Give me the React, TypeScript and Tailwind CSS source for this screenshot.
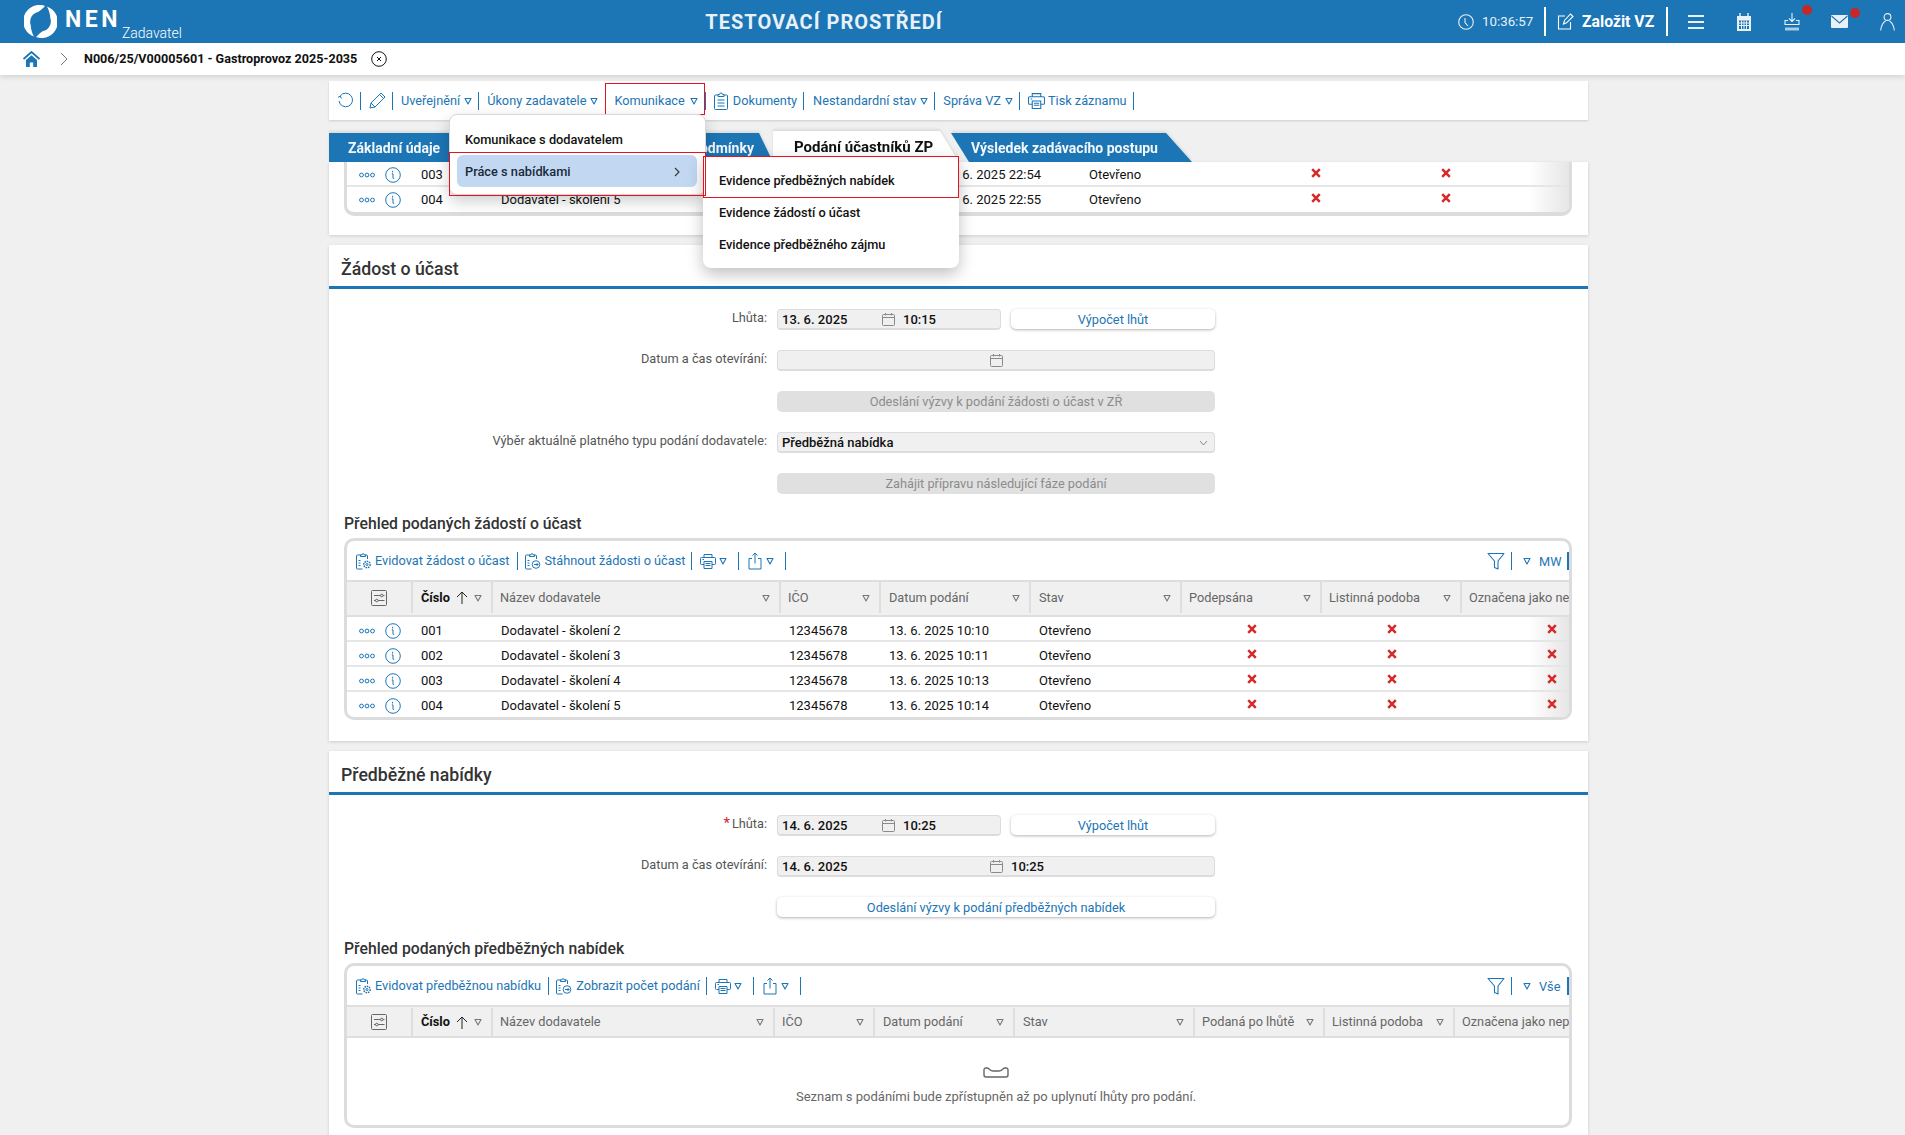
import React from "react";

const B = "#1c75b5";

function Tri({ c = B, className = "" }: { c?: string; className?: string }) {
  return (
    <svg width="8" height="8" viewBox="0 0 8 8" className={`flex-none ${className}`}>
      <path d="M1 1.5h6L4 7z" fill="none" stroke={c} strokeWidth="1.1" strokeLinejoin="round" />
    </svg>
  );
}
function Sep({ className = "ml-[7px] mr-[8px]" }: { className?: string }) {
  return <span className={`h-[18px] w-px flex-none bg-[#1c75b5] ${className}`} />;
}
function Dots() {
  return (
    <svg width="16" height="6" viewBox="0 0 16 6" className="flex-none">
      {[2.5, 8, 13.5].map((x) => (
        <circle key={x} cx={x} cy="3" r="1.9" fill="none" stroke={B} strokeWidth="1" />
      ))}
    </svg>
  );
}
function Info() {
  return (
    <svg width="16" height="16" viewBox="0 0 16 16" className="flex-none">
      <circle cx="8" cy="8" r="7.3" fill="none" stroke={B} strokeWidth="1" />
      <path d="M7.6 4.2v.9M7.2 6.9h.8v4.2c0 .4.3.6.7.5" fill="none" stroke={B} strokeWidth="1" strokeLinecap="round" />
    </svg>
  );
}
function Cross() {
  return (
    <svg width="10" height="10" viewBox="0 0 10 10" className="-translate-y-[2px]">
      <path d="M1.2 1.2l7.6 7.6M8.8 1.2L1.2 8.8" stroke="#d42a2a" strokeWidth="2.5" />
    </svg>
  );
}
function Clip({ kind }: { kind: "gear" | "arrow" }) {
  return (
    <svg width="17" height="18" viewBox="0 0 17 18" fill="none" stroke={B} strokeWidth="1" className="flex-none">
      <path d="M6 3H2.5A1 1 0 0 0 1.5 4v12a1 1 0 0 0 1 1h5M10 3h1.5a1 1 0 0 1 1 1v3" />
      <path d="M5.5 4.5V3h1.3a1.3 1.3 0 0 1 2.6 0h1.2v1.5z" />
      <path d="M3.5 8.5h2M3.5 11h2M3.5 13.5h2" />
      {kind === "gear" ? (
        <g>
          <circle cx="12" cy="12.5" r="3.2" strokeDasharray="1.6 .8" strokeWidth="1.4" />
          <circle cx="12" cy="12.5" r="1" />
        </g>
      ) : (
        <g>
          <circle cx="12" cy="12.5" r="3.8" />
          <path d="M10 12.5h4M12.6 11l1.5 1.5-1.5 1.5" />
        </g>
      )}
    </svg>
  );
}
function Printer({ s = 16 }: { s?: number }) {
  return (
    <svg width={s} height={s} viewBox="0 0 16 16" fill="none" stroke={B} strokeWidth="1" className="flex-none">
      <path d="M4 4.5V1.5h8v3M4 11.5H1.5a1 1 0 0 1-1-1V5.5a1 1 0 0 1 1-1h13a1 1 0 0 1 1 1v5a1 1 0 0 1-1 1H12" />
      <path d="M4 8.5h8v7H4zM5.5 10.5h5M5.5 12.5h5M2.5 6.5h1.5" />
    </svg>
  );
}
function Share() {
  return (
    <svg width="14" height="18" viewBox="0 0 14 18" fill="none" stroke={B} strokeWidth="1" className="flex-none">
      <path d="M4 6.5H1v10.5h12V6.5h-3M7 11.5V1M4.5 3.5L7 1l2.5 2.5" />
    </svg>
  );
}
function Funnel() {
  return (
    <svg width="18" height="18" viewBox="0 0 18 18" fill="none" stroke={B} strokeWidth="1.1" className="flex-none">
      <path d="M1 1.5h16l-6 7.5v8l-3.5-1.5V9z" strokeLinejoin="round" />
    </svg>
  );
}
function Sliders() {
  return (
    <svg width="16" height="16" viewBox="0 0 16 16" fill="none" stroke="#666" strokeWidth="1">
      <rect x=".5" y=".5" width="15" height="15" rx="1" />
      <path d="M3 5.5h6.5M12 5.5h1.5M3 10.5h1.5M7 10.5h6.5" />
      <circle cx="10.8" cy="5.5" r="1.3" />
      <circle cx="5.8" cy="10.5" r="1.3" />
    </svg>
  );
}
function Cal({ c = "#8a8a8a" }: { c?: string }) {
  return (
    <svg width="13" height="13" viewBox="0 0 13 13" fill="none" stroke={c} strokeWidth="1" className="flex-none">
      <rect x=".5" y="1.5" width="12" height="11" rx="1" />
      <path d="M.5 4.5h12M3.5 0v2.5M9.5 0v2.5" />
    </svg>
  );
}
function Logo() {
  const d = "M21 .9A16 16 0 0 0 10 31.6C8.5 29 7 25 6.7 20A10 10 0 0 1 14 7C16.5 5.5 19 3 21 .9z";
  return (
    <svg width="33" height="33" viewBox="0 0 33 33" className="flex-none">
      <path d={d} fill="#fff" />
      <path d={d} fill="#fff" transform="rotate(180 16.5 16.5)" />
    </svg>
  );
}

const tbl2 = "grid-cols-[66px_80px_288px_100px_150px_151px_140px_140px_180px]";
const tbl3 = "grid-cols-[66px_80px_282px_100px_140px_180px_130px_130px_184px]";
const tbl1 = "grid-cols-[66px_80px_279px_161px_148px_170px_130px_130px_58px]";

function Row({ cols, n, name, date, x3, last, tight }: { cols: string; n: string; name: string; date: string; x3?: boolean; last?: boolean; tight?: boolean }) {
  const pad = last ? (tight ? "pt-px" : "pt-[2px]") : tight ? "border-b-2 border-[#e6e6e6] pt-[3px]" : "border-b-2 border-[#e6e6e6] pt-[4px]";
  return (
    <div className={`relative grid h-[25px] items-center text-[13px] text-[#111] ${cols} ${pad}`}>
      <div className="flex items-center gap-[10px] pl-[12px]">
        <Dots />
        <Info />
      </div>
      <div className="pl-[8px]">{n}</div>
      <div className="pl-[8px] whitespace-nowrap">{name}</div>
      <div className="pl-[8px]">12345678</div>
      <div className="pl-[8px] whitespace-nowrap">{date}</div>
      <div className="pl-[8px]">Otevřeno</div>
      <div className="flex justify-center"><Cross /></div>
      <div className="flex justify-center"><Cross /></div>
      {x3 && <div className="flex justify-center"><Cross /></div>}
    </div>
  );
}

function Head({ cols, labels, h }: { cols: string; labels: string[]; h: string }) {
  return (
    <div className={`relative grid ${h} border-y-2 border-[#dedede] bg-[#f0f0f0] text-[12.75px] text-[#666] ${cols}`}>
      <div className="flex items-center justify-center border-r-2 border-[#dedede]"><Sliders /></div>
      <div className="flex items-center border-r-2 border-[#dedede] pl-[8px]">
        <b className="font-bold text-[#111]">Číslo</b>
        <svg width="12" height="13" viewBox="0 0 12 13" fill="none" stroke="#222" strokeWidth="1" className="ml-[6px]">
          <path d="M6 13V1M1 6l5-5 5 5" />
        </svg>
        <Tri c="#777" className="ml-[6px]" />
      </div>
      {labels.map((l, i) => (
        <div key={l} className={`flex items-center justify-between whitespace-nowrap pr-[9px] ${i === 2 || i === 3 ? "pl-[8px]" : "pl-[7px]"} ${i < labels.length - 1 ? "border-r-2 border-[#dedede]" : ""}`}>
          <span>{l}</span>
          {i < labels.length - 1 && <Tri c="#777" />}
        </div>
      ))}
    </div>
  );
}

function TBar({ a, b, right }: { a: string; b: string; right: string }) {
  return (
    <div className="flex h-[39px] items-center pl-[8px] text-[12.75px] text-[#1c75b5]">
      <Clip kind="gear" />
      <span className="ml-[3px] whitespace-nowrap">{a}</span>
      <Sep className="ml-[7px] mr-[6px]" />
      <Clip kind="arrow" />
      <span className="ml-[4px] whitespace-nowrap">{b}</span>
      <Sep className="ml-[6px] mr-[8px]" />
      <Printer />
      <Tri className="ml-[3px]" />
      <Sep className="ml-[11px] mr-[9px]" />
      <Share />
      <Tri className="ml-[4px]" />
      <Sep className="ml-[11px] mr-auto" />
      <Funnel />
      <Sep className="ml-[6px] mr-[11px]" />
      <Tri />
      <span className="ml-[8px] mr-[8px] mt-[3px] w-[20px]">{right}</span>
      <span className="h-[18px] w-[2px] flex-none bg-[#1c75b5]" />
    </div>
  );
}

function Field({ label, req, children }: { label?: string; req?: boolean; children: React.ReactNode }) {
  return (
    <div className="flex h-[21px] items-start">
      <label className="w-[438px] text-right text-[12.75px] leading-[18px] text-[#555] whitespace-nowrap">
        {req && <span className="mr-[2px] text-[15px] leading-none text-[#d42a2a]">*</span>}
        {label ? `${label}:` : ""}
      </label>
      <div className="ml-[10px] flex">{children}</div>
    </div>
  );
}
function Inp({ w, date, time, calAt }: { w: string; date?: string; time?: string; calAt: string }) {
  return (
    <div className={`relative flex h-[21px] items-center rounded-[4px] border border-b-2 border-[#dcdcdc] bg-[#f0f0f0] pl-[4px] pt-px text-[13px] font-medium text-[#111] ${w}`}>
      <span className={`whitespace-nowrap ${calAt}`}>{date}</span>
      <Cal />
      {time && <span className="ml-[8px]">{time}</span>}
    </div>
  );
}
function WhiteBtn({ w, children }: { w: string; children: React.ReactNode }) {
  return (
    <div className={`flex h-[20px] items-center justify-center rounded-[5px] bg-white pt-px text-[12.75px] text-[#1c75b5] shadow-[0_1px_3px_rgba(0,0,0,0.3)] ${w}`}>
      {children}
    </div>
  );
}
function GreyBtn({ children }: { children: React.ReactNode }) {
  return (
    <div className="flex h-[21px] w-[438px] items-center justify-center rounded-[5px] bg-[#e0e0e0] pt-px text-[12.75px] text-[#8c8c8c]">
      {children}
    </div>
  );
}
function Title({ children }: { children: React.ReactNode }) {
  return (
    <div className="flex h-[44px] items-center border-b-[3px] border-[#1c75b5] pl-[12px] pt-[8px] text-[17.7px] font-medium text-[#333]">
      {children}
    </div>
  );
}
function H3({ children, className = "" }: { children: React.ReactNode; className?: string }) {
  return <div className={`flex h-[20px] items-center pl-[15px] text-[15.75px] font-medium text-[#333] ${className}`}>{children}</div>;
}

const Fade = () => (
  <div className="pointer-events-none absolute bottom-0 right-0 top-0 w-[40px] bg-gradient-to-r from-transparent to-[#e6e6e6]" />
);

export default function App() {
  return (
    <div className="relative h-[1135px] overflow-hidden bg-[#f0f0f0] font-['Roboto',sans-serif]">
      {/* header */}
      <header className="relative z-20 flex h-[43px] items-center bg-[#1c75b5] text-white">
        <div className="flex w-[704px] flex-none items-center pl-[24px]">
          <Logo />
          <span className="ml-[8px] text-[23px] font-bold leading-none tracking-[3.5px] -translate-y-[2px]">NEN</span>
          <span className="ml-[1px] mt-[22px] text-[14px] font-light leading-none">Zadavatel</span>
        </div>
        <div className="w-[240px] flex-none whitespace-nowrap text-center text-[20px] font-bold tracking-[1px] text-[#e8f1f7]">TESTOVACÍ PROSTŘEDÍ</div>
        <div className="ml-auto flex items-center pr-[10px]">
          <svg width="16" height="16" viewBox="0 0 16 16" fill="none" stroke="#e8f1f7" strokeWidth="1.1">
            <circle cx="8" cy="8" r="7.3" />
            <path d="M7 4v4.5l3 3.5" />
          </svg>
          <span className="ml-[8px] w-[50px] whitespace-nowrap text-[13.3px] text-[#e8f1f7]">10:36:57</span>
          <span className="ml-[12px] h-[29px] w-[2px] bg-white" />
          <svg width="17" height="17" viewBox="0 0 17 17" fill="none" stroke="#fff" strokeWidth="1.1" className="ml-[11px]">
            <path d="M8 3H1.5v13h12V9" />
            <path d="M6.5 11l1-3.5L13.5 1l2.5 2.5-6.5 6.3z" />
          </svg>
          <span className="ml-[8px] w-[72px] whitespace-nowrap text-[15.75px] font-bold">Založit VZ</span>
          <span className="ml-[12px] h-[29px] w-[2px] bg-white" />
          <svg width="16" height="14" viewBox="0 0 16 14" fill="#e8f1f7" className="ml-[20px]">
            <rect y="0" width="16" height="2" />
            <rect y="6" width="16" height="2" />
            <rect y="12" width="16" height="2" />
          </svg>
          <svg width="16" height="18" viewBox="0 0 16 18" className="ml-[32px]">
            <path d="M1 3h14v15H1z" fill="#e8f1f7" />
            <path d="M4 0v5M12 0v5" stroke="#e8f1f7" strokeWidth="1.4" />
            <path d="M3 7.5h10v8.5H3z" fill="#1c75b5" />
            <path d="M3 10h10M3 12.5h10M5.5 7.5v8.5M8 7.5v8.5M10.5 7.5v8.5" stroke="#e8f1f7" strokeWidth="1" />
          </svg>
          <div className="relative ml-[32px] h-[18px] w-[16px]">
            <svg width="16" height="18" viewBox="0 0 16 18" fill="none" stroke="#e8f1f7" strokeWidth="1.1">
              <path d="M8 0v8M5 5.5L8 8.5l3-3M4 7.5H1v4h14v-4h-3" />
              <path d="M1 14.5h14v3H1z" fill="#a9cbe3" stroke="none" />
            </svg>
            <span className="absolute left-[18px] top-[-8px] h-[10px] w-[10px] rounded-full bg-[#c62828]" />
          </div>
          <div className="relative ml-[31px] h-[13px] w-[17px]">
            <svg width="17" height="13" viewBox="0 0 17 13">
              <rect width="17" height="13" rx="1" fill="#e8f1f7" />
              <path d="M.5 1l8 7 8-7" fill="none" stroke="#1c75b5" strokeWidth="1.1" />
            </svg>
            <span className="absolute left-[19px] top-[-7px] h-[10px] w-[10px] rounded-full bg-[#c62828]" />
          </div>
          <svg width="15" height="18" viewBox="0 0 15 18" fill="none" stroke="#e8f1f7" strokeWidth="1.1" className="ml-[32px]">
            <circle cx="7.5" cy="4" r="3.4" />
            <path d="M.7 17.5c.3-4 2.5-8 4.8-9.5M14.3 17.5c-.3-4-2.5-8-4.8-9.5" />
          </svg>
        </div>
      </header>

      {/* breadcrumb */}
      <div className="relative z-10 flex h-[32px] items-center bg-white pl-[23px] shadow-[0_2px_5px_rgba(0,0,0,0.12)]">
        <svg width="17" height="16" viewBox="0 0 17 16">
          <path d="M.5 8L8.5 1l8 7" fill="none" stroke="#1c75b5" strokeWidth="1.8" />
          <path d="M3 9l5.5-4.8L14 9v7H10.2v-4.5H6.8V16H3z" fill="#1c75b5" />
        </svg>
        <svg width="8" height="14" viewBox="0 0 8 14" fill="none" stroke="#777" strokeWidth="1" className="ml-[20px]">
          <path d="M1 1l6 6-6 6" />
        </svg>
        <span className="ml-[16px] whitespace-nowrap text-[12.6px] font-bold text-[#111]">N006/25/V00005601 - Gastroprovoz 2025-2035</span>
        <svg width="16" height="16" viewBox="0 0 16 16" fill="none" stroke="#111" strokeWidth="1" className="ml-[14px]">
          <circle cx="8" cy="8" r="7.3" />
          <path d="M6 6l4 4M10 6l-4 4" />
        </svg>
      </div>

      {/* main column */}
      <main className="ml-[329px] w-[1259px]">
        {/* toolbar */}
        <div className="mt-[6px] flex h-[39px] items-center bg-white pl-[8px] text-[12.75px] text-[#1c75b5] shadow-[0_1px_2px_rgba(0,0,0,0.15)] whitespace-nowrap">
          <svg width="17" height="17" viewBox="0 0 17 17" fill="none" stroke={B} strokeWidth="1" className="flex-none">
            <path d="M3.2 4A6.8 6.8 0 1 1 2 9" />
            <path d="M1 5.5L3.2 4l1.2 2.4" />
          </svg>
          <Sep className="ml-[6px] mr-[8px]" />
          <svg width="17" height="17" viewBox="0 0 17 17" fill="none" stroke={B} strokeWidth="1" className="flex-none">
            <path d="M1 16l1-5L12 1l4 4L6 15zM10.5 2.5l4 4M2 11l4 4" />
          </svg>
          <Sep className="ml-[6px] mr-[8px]" />
          <span>Uveřejnění</span>
          <Tri className="ml-[4px]" />
          <Sep className="ml-[6px] mr-[8px]" />
          <span>Úkony zadavatele</span>
          <Tri className="ml-[4px]" />
          <Sep />
          <span>Komunikace</span>
          <Tri className="ml-[5px]" />
          <Sep />
          <svg width="14" height="18" viewBox="0 0 14 18" fill="none" stroke={B} strokeWidth="1" className="flex-none">
            <path d="M4 3H1.5a1 1 0 0 0-1 1v12.5a1 1 0 0 0 1 1h11a1 1 0 0 0 1-1V4a1 1 0 0 0-1-1H10" />
            <path d="M4 4.5V2.5h1.5a1.5 1.5 0 0 1 3 0H10v2zM3.5 8h7M3.5 11h7M3.5 14h7" />
          </svg>
          <span className="ml-[5px]">Dokumenty</span>
          <Sep className="ml-[6px] mr-[9px]" />
          <span>Nestandardní stav</span>
          <Tri className="ml-[4px]" />
          <Sep className="ml-[6px] mr-[8px]" />
          <span>Správa VZ</span>
          <Tri className="ml-[4px]" />
          <Sep className="ml-[6px] mr-[8px]" />
          <Printer s={17} />
          <span className="ml-[3px]">Tisk záznamu</span>
          <Sep className="ml-[6px] mr-[8px]" />
        </div>

        {/* tabs */}
        <div className="mt-[11px] flex h-[31px] items-end whitespace-nowrap [filter:drop-shadow(0_-2px_1px_#dcdcdc)]">
          <div className="flex h-[29px] w-[444px] flex-none items-center bg-[#1c75b5] pl-[19px] pt-[2px] text-[14px] font-bold text-[#f2f7fb] [clip-path:polygon(0_0,calc(100%-14px)_0,100%_100%,0_100%)]">
            <span>Základní údaje</span>
            <span className="ml-auto pr-[19px]">Zadávací podmínky</span>
          </div>
          <div className="relative z-10 flex h-[31px] w-[186px] flex-none items-center bg-white pl-[21px] pt-[2px] text-[15px] font-bold text-[#111] [clip-path:polygon(0_0,167px_0,100%_100%,0_100%)]">
            Podání účastníků ZP
          </div>
          <div className="ml-[-8px] flex h-[29px] w-[241px] flex-none items-center bg-[#1c75b5] pl-[20px] pt-[2px] text-[14px] font-bold text-[#f2f7fb] [clip-path:polygon(0_0,215px_0,100%_100%,18px_100%)]">
            Výsledek zadávacího postupu
          </div>
        </div>

        {/* scrolled-off table */}
        <section className="h-[73px] bg-white shadow-[0_1px_3px_rgba(0,0,0,0.15)]">
          <div className="ml-[15px] mr-[16px] overflow-hidden rounded-b-[10px] border-x-[3px] border-b-[4px] border-[#dcdcdc]">
            <div className="relative">
              <Fade />
              <Row cols={tbl1} n="003" name="Dodavatel - školení 4" date="13. 6. 2025 22:54" tight />
              <Row cols={tbl1} n="004" name="Dodavatel - školení 5" date="13. 6. 2025 22:55" last tight />
            </div>
          </div>
        </section>

        {/* Žádost o účast */}
        <section className="mt-[10px] h-[496px] bg-white shadow-[0_1px_3px_rgba(0,0,0,0.15)]">
          <Title>Žádost o účast</Title>
          <div className="flex flex-col gap-[20px] pt-[20px]">
            <Field label="Lhůta">
              <Inp w="w-[224px]" date="13. 6. 2025" time="10:15" calAt="w-[100px]" />
              <div className="ml-[10px]"><WhiteBtn w="w-[204px]">Výpočet lhůt</WhiteBtn></div>
            </Field>
            <Field label="Datum a čas otevírání">
              <Inp w="w-[438px]" calAt="w-[208px]" />
            </Field>
            <Field>
              <GreyBtn>Odeslání výzvy k podání žádosti o účast v ZŘ</GreyBtn>
            </Field>
            <Field label="Výběr aktuálně platného typu podání dodavatele">
              <div className="flex h-[21px] w-[438px] items-center justify-between rounded-[4px] border border-b-2 border-[#dcdcdc] bg-[#f0f0f0] pl-[4px] pr-[6px] pt-px text-[13px] font-medium text-[#111]">
                <span>Předběžná nabídka</span>
                <svg width="9" height="6" viewBox="0 0 9 6" fill="none" stroke="#888" strokeWidth="1"><path d="M1 1l3.5 4L8 1" /></svg>
              </div>
            </Field>
            <Field>
              <GreyBtn>Zahájit přípravu následující fáze podání</GreyBtn>
            </Field>
          </div>
          <H3 className="mt-[20px]">Přehled podaných žádostí o účast</H3>
          <div className="ml-[15px] mr-[16px] mt-[4px] overflow-hidden rounded-[10px] border-[3px] border-[#dcdcdc]">
            <TBar a="Evidovat žádost o účast" b="Stáhnout žádosti o účast" right="MW" />
            <div className="relative overflow-hidden">
              <Fade />
              <Head cols={tbl2} h="h-[37px] pb-[2px]" labels={["Název dodavatele", "IČO", "Datum podání", "Stav", "Podepsána", "Listinná podoba", "Označena jako nevyhovující"]} />
              <Row cols={tbl2} n="001" name="Dodavatel - školení 2" date="13. 6. 2025 10:10" x3 />
              <Row cols={tbl2} n="002" name="Dodavatel - školení 3" date="13. 6. 2025 10:11" x3 />
              <Row cols={tbl2} n="003" name="Dodavatel - školení 4" date="13. 6. 2025 10:13" x3 />
              <Row cols={tbl2} n="004" name="Dodavatel - školení 5" date="13. 6. 2025 10:14" x3 last />
            </div>
          </div>
        </section>

        {/* Předběžné nabídky */}
        <section className="mt-[10px] h-[400px] bg-white shadow-[0_1px_3px_rgba(0,0,0,0.15)]">
          <Title>Předběžné nabídky</Title>
          <div className="flex flex-col gap-[20px] pt-[20px]">
            <Field label="Lhůta" req>
              <Inp w="w-[224px]" date="14. 6. 2025" time="10:25" calAt="w-[100px]" />
              <div className="ml-[10px]"><WhiteBtn w="w-[204px]">Výpočet lhůt</WhiteBtn></div>
            </Field>
            <Field label="Datum a čas otevírání">
              <Inp w="w-[438px]" date="14. 6. 2025" time="10:25" calAt="w-[208px]" />
            </Field>
            <Field>
              <WhiteBtn w="w-[438px]">Odeslání výzvy k podání předběžných nabídek</WhiteBtn>
            </Field>
          </div>
          <H3 className="mt-[21px]">Přehled podaných předběžných nabídek</H3>
          <div className="ml-[15px] mr-[16px] mt-[4px] overflow-hidden rounded-[10px] border-[3px] border-[#dcdcdc]">
            <TBar a="Evidovat předběžnou nabídku" b="Zobrazit počet podání" right="Vše" />
            <Head cols={tbl3} h="h-[33px] pt-px" labels={["Název dodavatele", "IČO", "Datum podání", "Stav", "Podaná po lhůtě", "Listinná podoba", "Označena jako nepřijatá"]} />
            <div className="flex h-[87px] w-[1298px] flex-col items-center text-[13px] text-[#666]">
              <svg width="26" height="11" viewBox="0 0 26 11" fill="none" stroke="#666" strokeWidth="1.4" className="mt-[29px]">
                <path d="M3 1C1.5 1 1 2 1 3v5c0 1 .8 2 2 2h20c1.2 0 2-1 2-2V3c0-1-.5-2-2-2h-1c-2 0-3 3-6 3h-6C7 4 6 1 4 1z" />
              </svg>
              <span className="mt-[9px] whitespace-nowrap">Seznam s podáními bude zpřístupněn až po uplynutí lhůty pro podání.</span>
            </div>
          </div>
        </section>
      </main>

      {/* Komunikace highlight */}
      <div className="absolute left-[605px] top-[83px] z-30 h-[32px] w-[100px] border border-[#e3141f]" />

      {/* menu level 1 */}
      <div className="absolute left-[449px] top-[114px] z-30 h-[81px] w-[257px] rounded-[8px] border border-[#d8d8d8] bg-white text-[12.8px] font-medium text-[#111] shadow-[0_6px_16px_rgba(0,0,0,0.2)]">
        <div className="flex h-[37px] items-end pb-[3px] pl-[15px]">Komunikace s dodavatelem</div>
        <div className="ml-[7px] mt-[3px] flex h-[32px] w-[240px] items-center justify-between rounded-[6px] bg-[#c2d8f2] pl-[8px] pr-[17px] pt-px text-[#1a2a3a]">
          <span>Práce s nabídkami</span>
          <svg width="6" height="10" viewBox="0 0 6 10" fill="none" stroke="#333" strokeWidth="1.1"><path d="M1 1l4 4-4 4" /></svg>
        </div>
      </div>
      <div className="absolute left-[449px] top-[152px] z-40 h-[44px] w-[257px] border border-[#e3141f]" />

      {/* menu level 2 */}
      <div className="absolute left-[703px] top-[156px] z-30 flex h-[112px] w-[256px] flex-col rounded-b-[8px] bg-white pl-[16px] pt-[9px] text-[12.75px] font-medium text-[#111] shadow-[0_6px_16px_rgba(0,0,0,0.25)]">
        <div className="flex h-[32px] items-center">Evidence předběžných nabídek</div>
        <div className="flex h-[32px] items-center">Evidence žádostí o účast</div>
        <div className="flex h-[32px] items-center">Evidence předběžného zájmu</div>
      </div>
      <div className="absolute left-[703px] top-[156px] z-40 h-[42px] w-[256px] border border-[#e3141f]" />
    </div>
  );
}
